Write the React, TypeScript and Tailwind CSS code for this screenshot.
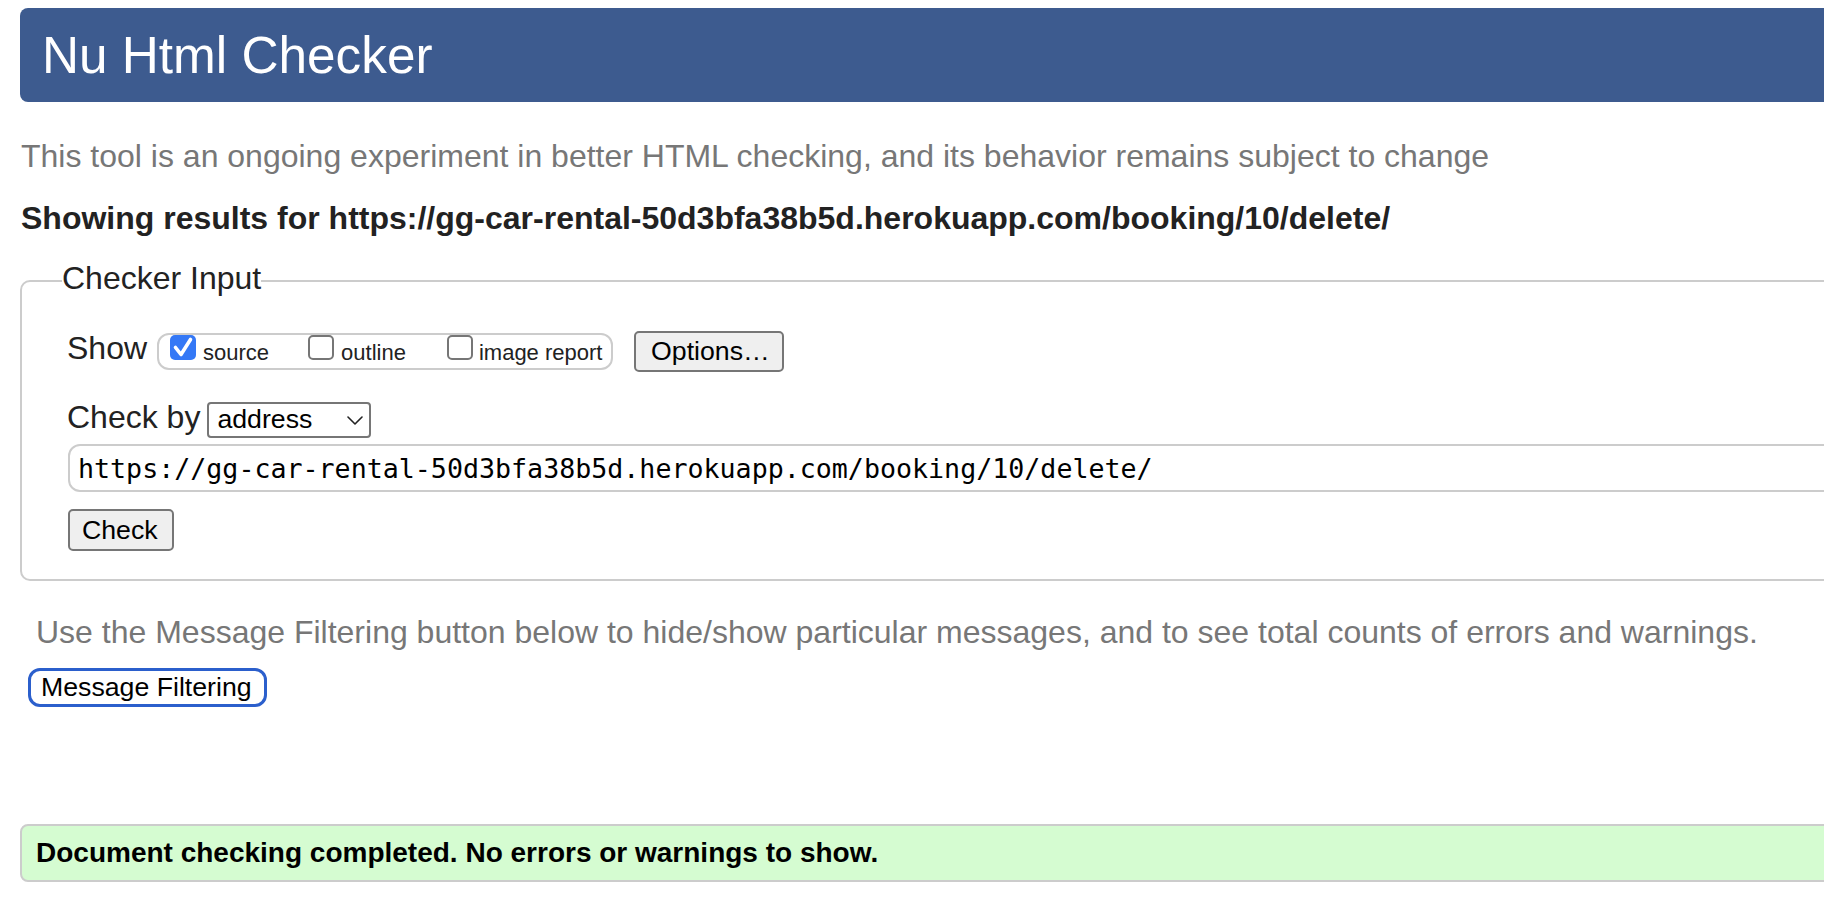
import React from "react";

function Checkbox({ checked }: { checked?: boolean }) {
  if (checked) {
    return (
      <div className="flex h-[25px] w-[26px] shrink-0 rounded-[5px] bg-[#3478f6]">
        <svg className="block h-full w-full" viewBox="0 0 26 25" fill="none">
          <path d="M5.5 12.5 L11 19.5 L20.5 4.5" stroke="white" strokeWidth="3.6" strokeLinecap="round" strokeLinejoin="round" />
        </svg>
      </div>
    );
  }
  return <div className="h-[25px] w-[26px] shrink-0 rounded-[5px] border-2 border-[#767676] bg-white" />;
}

export default function App() {
  const url = "https://gg-car-rental-50d3bfa38b5d.herokuapp.com/booking/10/delete/";
  return (
    <div className="h-[904px] w-[1824px] overflow-hidden bg-white font-['Liberation_Sans',Arial,Helvetica,sans-serif] text-[#222]">
      <div className="w-[1900px] pt-2">
        <h1 className="ml-5 h-[94px] rounded-l-[8px] bg-[#3d5b8f] pl-[22px] text-[51.3px] font-normal leading-[95px] text-white">
          Nu Html Checker
        </h1>
        <p className="ml-[21px] mt-[34px] text-[32px] leading-[40px] text-[#777]">
          This tool is an ongoing experiment in better HTML checking, and its behavior remains subject to change
        </p>
        <p className="ml-[21px] mt-[22px] text-[32px] font-bold leading-[40px] text-[#222]">
          Showing results for {url}
        </p>

        <fieldset className="ml-5 mt-[25px] rounded-[10px] border-2 border-[#ccc] pb-[28px] pl-[45px]">
          <legend className="-ml-[5px] pb-[6px] text-[32px] leading-[30px] text-[#222]">Checker Input</legend>
          <div className="flex flex-col">
            <div className="mt-[32px] flex items-start">
              <span className="text-[32px] leading-[35px]">Show</span>
              <div className="ml-[10px] mt-[2px] flex h-[37px] w-[456px] items-baseline rounded-[12px] border-2 border-[#ccc] pl-[11px] text-[22px] leading-[25px] text-[#222]">
                <label className="flex items-baseline gap-[7px]">
                  <Checkbox checked />
                  <span>source</span>
                </label>
                <label className="ml-[39px] flex items-baseline gap-[7px]">
                  <Checkbox />
                  <span>outline</span>
                </label>
                <label className="ml-[41px] flex items-baseline gap-[6px]">
                  <Checkbox />
                  <span>image report</span>
                </label>
              </div>
              <button className="ml-[21px] h-[41px] w-[150px] rounded-[5px] border-2 border-[#767676] bg-[#efefef] pl-[15px] text-left text-[26.7px] leading-[37px] text-black">
                Options…
              </button>
            </div>

            <div className="mt-[30px] flex items-start">
              <span className="text-[32px] leading-[31px]">Check by</span>
              <div className="ml-[7px] flex h-[36px] w-[164px] items-start rounded-[4px] border-2 border-[#767676] bg-white pl-[8px] text-[26.7px] leading-[30px] text-black">
                <span>address</span>
                <svg className="ml-auto mr-[6px] mt-[12px]" width="16" height="9" viewBox="0 0 16 9" fill="none">
                  <path d="M1 1 L8 8 L15 1" stroke="#222" strokeWidth="1.6" strokeLinecap="round" strokeLinejoin="round" />
                </svg>
              </div>
            </div>

            <input
              readOnly
              value={url}
              className="ml-[1px] mt-[6px] block h-[48px] w-[1800px] rounded-[12px] border-2 border-[#ccc] bg-white pl-[8px] font-['DejaVu_Sans_Mono',monospace] text-[26.65px] text-black outline-none"
            />

            <div className="mt-[17px] flex">
              <button className="ml-[1px] h-[42px] w-[106px] rounded-[5px] border-2 border-[#767676] bg-[#efefef] pl-[12px] text-left text-[26.7px] leading-[38px] text-black">
                Check
              </button>
            </div>
          </div>
        </fieldset>

        <p className="ml-[36px] mt-[31px] text-[32px] leading-[40px] text-[#777]">
          Use the Message Filtering button below to hide/show particular messages, and to see total counts of errors and warnings.
        </p>
        <button className="ml-[28px] mt-[16px] block h-[39px] w-[239px] rounded-[12px] border-[3px] border-[#2b5fcc] bg-white pl-[10px] text-left text-[26.7px] leading-[33px] text-black">
          Message Filtering
        </button>

        <div className="ml-5 mt-[117px] h-[58px] rounded-[8px] border-2 border-[#ccc] bg-[#d5fcd1] pl-[14px] text-[28px] font-bold leading-[54px] text-black">
          Document checking completed. No errors or warnings to show.
        </div>
      </div>
    </div>
  );
}
